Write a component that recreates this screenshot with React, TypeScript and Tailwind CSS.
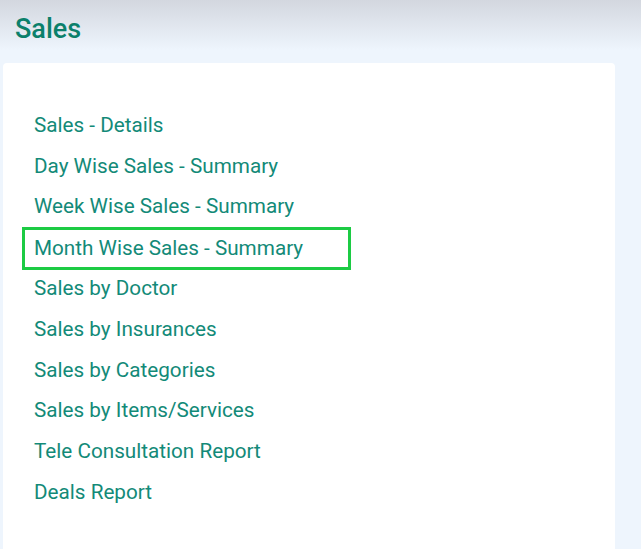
const reports = [
  "Sales - Details",
  "Day Wise Sales - Summary",
  "Week Wise Sales - Summary",
  "Month Wise Sales - Summary",
  "Sales by Doctor",
  "Sales by Insurances",
  "Sales by Categories",
  "Sales by Items/Services",
  "Tele Consultation Report",
  "Deals Report",
];

const App = () => {
  return (
    <div
      className="relative min-h-[549px] bg-[#eef5fd] overflow-hidden"
      style={{ fontFamily: "Roboto, 'Liberation Sans', sans-serif" }}
    >
      <div className="absolute inset-x-0 top-0 h-[50px] bg-gradient-to-b from-[#d3d7df] to-[#eef5fd]" />
      <div className="relative">
        <h1 className="h-[63px] pl-[15px] pt-[9px] text-[27px] font-medium text-[#0b806b]">
          Sales
        </h1>
        <div className="ml-[3px] w-[612px] min-h-[486px] rounded-t-[4px] bg-white pl-[31px] pt-[42px]">
          <ul className="flex flex-col">
            {reports.map((label) => {
              const isActive = label === "Month Wise Sales - Summary";
              return (
                <li key={label} className="h-[40.8px] flex items-center">
                  {isActive ? (
                    <span className="-ml-[12px] -mt-[1px] -mb-[3px] flex h-[43px] w-[329px] items-center border-[3px] border-[#1ccb44] pl-[9px] text-[20.7px] text-[#138a78]">
                      {label}
                    </span>
                  ) : (
                    <a className="text-[20.7px] text-[#138a78] cursor-pointer">{label}</a>
                  )}
                </li>
              );
            })}
          </ul>
        </div>
      </div>
    </div>
  );
};

export default App;
